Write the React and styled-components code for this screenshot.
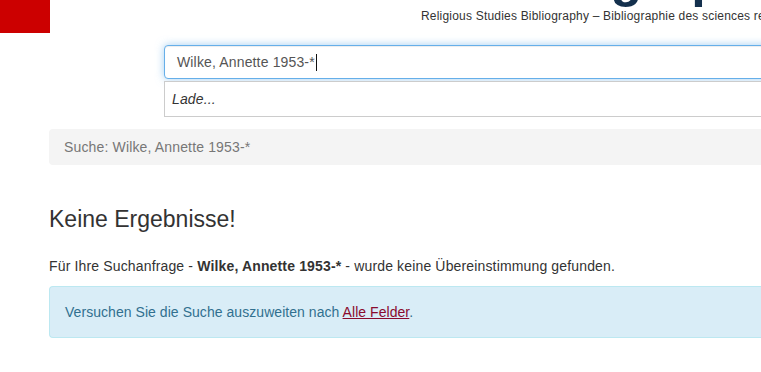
import React from 'react'
import styled, { createGlobalStyle } from 'styled-components'

const GlobalStyle = createGlobalStyle`
  html, body {
    margin: 0;
    padding: 0;
    background: #fff;
    overflow: hidden;
  }
  body {
    font-family: "Liberation Sans", Arial, Helvetica, sans-serif;
    font-size: 14px;
    line-height: 20px;
    letter-spacing: 0.15px;
    color: #333;
  }
`

const query = 'Wilke, Annette 1953-*'

const App = () => {
    return (
        <Page>
            <GlobalStyle />
            <Header>
                <RedMark />
                <Brand>
                    <LogoClip>
                        <LogoText>Bibliographie</LogoText>
                    </LogoClip>
                    <Subtitle>
                        Religious Studies Bibliography – Bibliographie des sciences religieuses
                    </Subtitle>
                </Brand>
            </Header>

            <SearchArea>
                <SearchInput>
                    {query}
                    <Caret />
                </SearchInput>
                <Suggest>Lade...</Suggest>
            </SearchArea>

            <Content>
                <Breadcrumb>Suche: {query}</Breadcrumb>
                <Heading>Keine Ergebnisse!</Heading>
                <Text>
                    Für Ihre Suchanfrage - <strong>{query}</strong> - wurde keine Übereinstimmung gefunden.
                </Text>
                <Alert>
                    Versuchen Sie die Suche auszuweiten nach <Link href="#">Alle Felder</Link>.
                </Alert>
            </Content>
        </Page>
    )
}

const Page = styled.div`
    width: 1200px;
`;

const Header = styled.header`
    display: flex;
    align-items: flex-start;
`;

const RedMark = styled.div`
    width: 50px;
    height: 33px;
    background-color: #cc0000;
    flex-shrink: 0;
`;

const Brand = styled.div`
    display: flex;
    flex-flow: column;
    margin-left: 371px;
`;

const LogoClip = styled.div`
    height: 8px;
    overflow: hidden;
    padding-left: 45px;
`;

const LogoText = styled.div`
    margin-top: -48px;
    font-size: 52px;
    line-height: 52px;
    font-weight: bold;
    letter-spacing: 0;
    color: #14304d;
    white-space: nowrap;
`;

const Subtitle = styled.div`
    font-size: 12px;
    line-height: 17px;
    letter-spacing: 0.2px;
    color: #333;
    white-space: nowrap;
`;

const SearchArea = styled.div`
    margin: 12px 0 0 164px;
    display: flex;
    flex-flow: column;
    gap: 2px;
`;

const SearchInput = styled.div`
    height: 34px;
    box-sizing: border-box;
    padding: 6px 12px;
    font-size: 14px;
    line-height: 20px;
    color: #555;
    background: #fff;
    border: 1px solid #66afe9;
    border-radius: 4px 0 0 4px;
    box-shadow: inset 0 1px 1px rgba(0, 0, 0, 0.075), 0 0 8px rgba(102, 175, 233, 0.6);
    display: flex;
    align-items: center;
`;

const Caret = styled.span`
    display: inline-block;
    width: 1px;
    height: 17px;
    margin-left: 1px;
    background: #111;
`;

const Suggest = styled.div`
    height: 36px;
    box-sizing: border-box;
    padding: 7px 7px;
    font-style: italic;
    color: #333;
    background: #fff;
    border: 1px solid #ccc;
    border-right: none;
`;

const Content = styled.main`
    margin: 12px 0 0 49px;
`;

const Breadcrumb = styled.div`
    padding: 8px 15px;
    background-color: #f4f4f4;
    border-radius: 4px;
    color: #777;
    margin-bottom: 41px;
`;

const Heading = styled.h3`
    margin: 0 0 24px;
    font-size: 23px;
    line-height: 26px;
    font-weight: 500;
    letter-spacing: 0;
    color: #333;
`;

const Text = styled.p`
    margin: 0 0 10px;
`;

const Alert = styled.div`
    padding: 15px;
    background-color: #d9edf7;
    border: 1px solid #bce8f1;
    border-right: none;
    border-radius: 4px 0 0 4px;
    color: #31708f;
    letter-spacing: 0.05px;
`;

const Link = styled.a`
    color: #8a0b2e;
    text-decoration: underline;
`;

export default App;
